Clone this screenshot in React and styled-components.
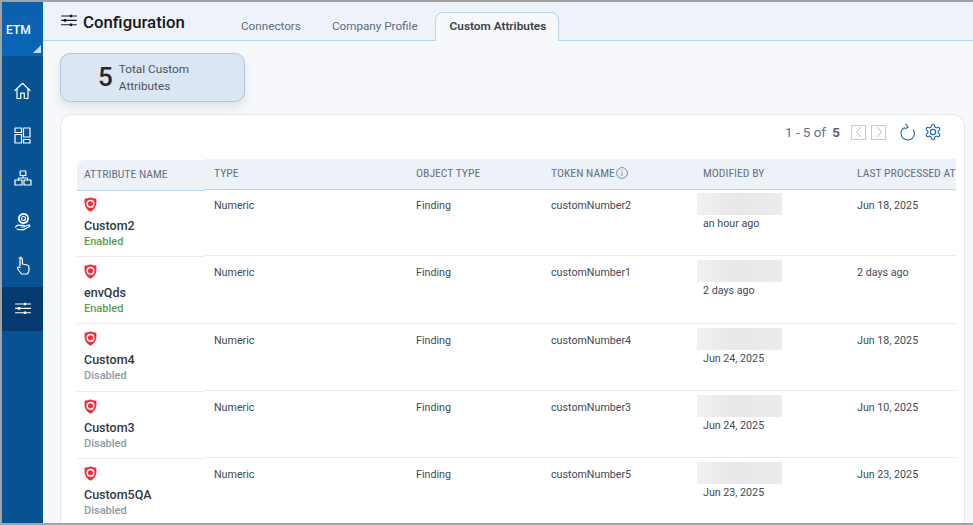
import React from "react";
import styled, { createGlobalStyle } from "styled-components";

const Global = createGlobalStyle`
  html, body { margin: 0; padding: 0; height: 100%; overflow: hidden; }
  body { font-family: Roboto, "Liberation Sans", sans-serif; color: #3b4450; }
  #root { height: 100%; }
`;

const Frame = styled.div`
  width: 973px; height: 525px; box-sizing: border-box;
  border: solid #a3a3a3; border-width: 2px 0 2px 2px;
  display: flex; background: #f6f8fb; overflow: hidden;
`;
const Sidebar = styled.nav`
  width: 41px; flex: none; background: #075293; display: flex; flex-direction: column;
`;
const Brand = styled.div`
  height: 54px; background: linear-gradient(#0a5fae, #0a66b8); color: #fff; position: relative;
  font-size: 12px; font-weight: 500; padding: 21px 0 0 4px; box-sizing: border-box;
  &::after {
    content: ""; position: absolute; right: 2px; bottom: 3px; width: 0; height: 0;
    border-style: solid; border-width: 0 0 8px 8px; border-color: transparent transparent #c6d8ea transparent;
  }
`;
const NavList = styled.div`
  display: flex; flex-direction: column; padding-top: 13px;
`;
const NavItem = styled.div`
  height: 43.6px; display: flex; align-items: center; justify-content: center;
  background: ${(p) => (p.$active ? "#053b70" : "transparent")};
  color: #fff;
`;
const Main = styled.div`
  flex: 1; min-width: 0; display: flex; flex-direction: column;
`;
const Header = styled.header`
  height: 39px; flex: none; box-sizing: border-box; background: #eef3f9;
  border-bottom: 1px solid #bcd4ea; display: flex; align-items: flex-end;
  padding-left: 18px;
`;
const TitleWrap = styled.div`
  display: flex; align-items: center; gap: 6px; width: 166px; height: 38px; padding-top: 2px; box-sizing: border-box;
  color: #15181c;
`;
const TitleIcon = styled.div`
  display: flex; margin-top: -4px;
`;
const Title = styled.h1`
  margin: 0; font-size: 16.8px; font-weight: 500; color: #15181c;
`;
const Tabs = styled.div`
  display: flex; height: 29px; margin-bottom: -1px;
`;
const Tab = styled.div`
  font-size: 11.7px; box-sizing: border-box; height: 29px; padding: 7px 14px 0; margin-right: ${(p) => p.$gap || 0}px;
  color: #5d6b7a;
  ${(p) => p.$active && `
    font-size: 11.8px; font-weight: 600; color: #39424e; background: #f6f8fb;
    border: 1px solid #bcd4ea; border-bottom: none; border-radius: 8px 8px 0 0;
    padding: 6px 12px 0 14px;
  `}
`;
const Content = styled.div`
  flex: 1; min-height: 0; padding: 12px 8px 0 17px; display: flex; flex-direction: column;
`;
const StatCard = styled.div`
  width: 185px; height: 49px; box-sizing: border-box; background: #dbe6f2;
  border: 1px solid #a9c8e4; border-radius: 10px; box-shadow: 0 6px 10px rgba(90, 110, 140, 0.14);
  display: flex; align-items: center; padding-left: 37px; gap: 6px;
`;
const StatNum = styled.div`
  font-size: 26px; font-weight: 500; color: #23282e; margin-top: -2px;
`;
const StatLabel = styled.div`
  font-size: 11.8px; line-height: 17px; color: #4a5460; width: 90px;
`;
const Panel = styled.section`
  flex: 1; min-height: 0; margin-top: 12px; background: #fff; border: 1px solid #e3e8ee; border-bottom: none;
  border-radius: 12px 12px 0 0; padding: 0 8px 0 16px; overflow: hidden;
`;
const Toolbar = styled.div`
  height: 44px; display: flex; align-items: center; justify-content: flex-end; padding-right: 14px; padding-bottom: 10px; box-sizing: border-box;
`;
const Pager = styled.div`
  font-size: 13.4px; color: #66727f; margin-right: 11px;
  b { font-weight: 700; margin-left: 3px; color: #5a6571; }
`;
const PageBtn = styled.div`
  width: 15px; height: 15px; box-sizing: border-box; border: 1px solid #c5cbd2; margin-right: 5px; display: flex; align-items: center; justify-content: center; color: #b5bcc4;
  &:last-of-type { margin-right: 0; }
`;
const ToolIcon = styled.div`
  display: flex; color: #1b6cb0; margin-left: ${(p) => p.$ml}px;
`;
const TableWrap = styled.div`
  display: flex; align-items: flex-start;
`;
const FixedCol = styled.div`
  width: 128px; flex: none; padding-top: 1px;
`;
const FixedHead = styled.div`
  height: 30.5px; box-sizing: border-box; background: #edf2f9; border-bottom: 1px solid #bcd6ee; border-radius: 8px 0 0 0;
  padding: 7px 0 0 7px;
`;
const HeadText = styled.span`
  font-family: "Roboto Condensed", "Liberation Sans Narrow", Roboto, sans-serif; font-size: 11.7px; line-height: 14px; color: #66727f; white-space: nowrap;
  display: flex; align-items: center; gap: 1px;
`;
const FixedRow = styled.div`
  height: 66.35px; margin-bottom: 1px; box-sizing: border-box; border-bottom: 1px solid #e6ebef; padding: 6px 0 0 7px;
`;
const ShieldWrap = styled.div`
  display: flex; height: 15px;
`;
const Name = styled.div`
  font-size: 12.5px; font-weight: 500; color: #2f3947; margin-top: 7px; line-height: 14px;
`;
const Status = styled.div`
  font-size: 11px; font-weight: 500; line-height: 14px; margin-top: 2px; color: ${(p) => (p.$on ? "#5c9e4f" : "#8a9ba8")};
`;
const ScrollCol = styled.div`
  flex: 1; min-width: 0; overflow: hidden;
`;
const Row = styled.div`
  display: grid; grid-template-columns: 202px 135px 152px 154px 110px; width: 753px;
`;
const HeadRow = styled(Row)`
  height: 31px; box-sizing: border-box; background: #edf2f9; border-bottom: 1px solid #bcd6ee;
`;
const HeadCell = styled.div`
  padding: 7px 0 0 9px;
`;
const BodyRow = styled(Row)`
  height: 66.35px; margin-bottom: 1px; box-sizing: border-box; border-bottom: 1px solid #e6ebef;
`;
const Cell = styled.div`
  font-size: 10.7px; color: #3f4a57; padding: 9px 0 0 9px; line-height: 13px;
`;
const Blurred = styled.div`
  width: 85px; height: 22px; margin: -6px 0 0 -6px; background: linear-gradient(90deg, #f1f1f1, #e8e8ea 45%, #ececec); 
`;
const SubDate = styled.div`
  margin-top: 2px; line-height: 13px;
`;

const Shield = () => (
  <svg width="13" height="15" viewBox="0 0 13 15">
    <path d="M6.500.3C8.500 1.300 10.500 1.700 12.300 1.700c.6 5 .2 9.500-5.800 13C.5 11.200.1 6.700.7 1.700 2.500 1.700 4.500 1.300 6.500.3Z" fill="#ee2f3a" />
    <circle cx="6.500" cy="6.800" r="3.300" fill="none" stroke="#fff" strokeWidth="1.500" />
    <path d="M7.500 9l1.300 1.700" stroke="#fff" strokeWidth="1.300" />
  </svg>
);

const iconProps = { fill: "none", stroke: "currentColor", strokeWidth: 1.2, strokeLinecap: "round", strokeLinejoin: "round" };

const Sliders = ({ size = 16 }) => (
  <svg width={size} height={size * 0.8} viewBox="0 0 16 13" fill="none" stroke="currentColor" strokeWidth="1.100">
    <path d="M0 2h16M0 6.500h16M0 11h16" />
    <path d="M10 .7v2.600M4 5.200v2.600M10 9.700v2.600" strokeWidth="2.400" />
  </svg>
);

const HomeIcon = () => (
  <svg width="17" height="18" viewBox="0 0 17 18" {...iconProps}>
    <path d="M1 8.500 8.500 1.300 16 8.500" />
    <path d="M3 7v9.500h3.700v-5.300h3.600v5.300H14V7" />
  </svg>
);
const DashIcon = () => (
  <svg width="17" height="17" viewBox="0 0 17 17" {...iconProps} style={{ marginTop: 2 }}>
    <rect x="1" y="1" width="6.500" height="4.500" />
    <rect x="1" y="7.500" width="6.500" height="8.500" />
    <rect x="9.500" y="1" width="6.500" height="9" />
    <rect x="9.500" y="12.500" width="6.500" height="3.500" />
  </svg>
);
const OrgIcon = () => (
  <svg width="18" height="16" viewBox="0 0 18 16" {...iconProps}>
    <rect x="6.200" y="1" width="5.600" height="4.500" />
    <path d="M9 5.500V8M4.500 10V8h9v2" />
    <rect x="1" y="10" width="7" height="5" />
    <rect x="10" y="10" width="7" height="5" />
  </svg>
);
const HandGear = () => (
  <svg width="18" height="19" viewBox="0 0 18 19" {...iconProps}>
    <circle cx="9.500" cy="6.500" r="4.600" strokeDasharray="2 1" strokeWidth="1.800" />
    <circle cx="9.500" cy="6.500" r="2" />
    <path d="M1.500 15c1.500-2 3-2.200 5-1.600h3c1.200 0 1.200 1.600 0 1.600H7m2.500 0 5-2c1.300-.4 1.800 1 .8 1.600L9.500 17.600H5L3 17" />
  </svg>
);
const TouchIcon = () => (
  <svg width="14" height="19" viewBox="0 0 14 19" {...iconProps}>
    <path d="M3 2.500C3.200 1.500 4.500.8 5.500 1.200" stroke="#f1b6c8" />
    <path d="M4 10V3.500c0-1.700 2.400-1.700 2.400 0V8l4.600 1c1.400.3 2 1.100 2 2.400V14c0 2-1 3-1.600 4H5.500L1.800 13c-1-1.300.6-2.800 2.200-1.400" />
  </svg>
);

const rows = [
  { n: "Custom2", on: true, t: "customNumber2", m: "an hour ago", l: "Jun 18, 2025" },
  { n: "envQds", on: true, t: "customNumber1", m: "2 days ago", l: "2 days ago" },
  { n: "Custom4", on: false, t: "customNumber4", m: "Jun 24, 2025", l: "Jun 18, 2025" },
  { n: "Custom3", on: false, t: "customNumber3", m: "Jun 24, 2025", l: "Jun 10, 2025" },
  { n: "Custom5QA", on: false, t: "customNumber5", m: "Jun 23, 2025", l: "Jun 23, 2025" },
];

export default function App() {
  return (
    <Frame>
      <Global />
      <Sidebar>
        <Brand>ETM</Brand>
        <NavList>
          <NavItem><HomeIcon /></NavItem>
          <NavItem><DashIcon /></NavItem>
          <NavItem><OrgIcon /></NavItem>
          <NavItem><HandGear /></NavItem>
          <NavItem><TouchIcon /></NavItem>
          <NavItem $active><Sliders /></NavItem>
        </NavList>
      </Sidebar>
      <Main>
        <Header>
          <TitleWrap>
            <TitleIcon><Sliders /></TitleIcon>
            <Title>Configuration</Title>
          </TitleWrap>
          <Tabs>
            <Tab $gap={3}>Connectors</Tab>
            <Tab $gap={3}>Company Profile</Tab>
            <Tab $active>Custom Attributes</Tab>
          </Tabs>
        </Header>
        <Content>
          <StatCard>
            <StatNum>5</StatNum>
            <StatLabel>Total Custom Attributes</StatLabel>
          </StatCard>
          <Panel>
            <Toolbar>
              <Pager>1 - 5 of <b>5</b></Pager>
              <PageBtn>
                <svg width="8" height="12" viewBox="0 0 8 12" fill="none" stroke="currentColor"><path d="M6 1 1.500 6 6 11" /></svg>
              </PageBtn>
              <PageBtn>
                <svg width="8" height="12" viewBox="0 0 8 12" fill="none" stroke="currentColor"><path d="M2 1l4.500 5L2 11" /></svg>
              </PageBtn>
              <ToolIcon $ml={9}>
                <svg width="16" height="18" viewBox="0 0 16 18" fill="none" stroke="currentColor" strokeWidth="1.100">
                  <path d="M5 4.500C2.500 5.500 1 7.800 1 10.300 1 14 4 17 7.800 17c3.600 0 6.600-3 6.600-6.500 0-1.500-.4-2.800-1.200-3.800" />
                  <path d="M5.500.8 8 4 4.800 6" />
                </svg>
              </ToolIcon>
              <ToolIcon $ml={8}>
                <svg width="18" height="18" viewBox="0 0 24 24" fill="none" stroke="currentColor" strokeWidth="1.500" strokeLinejoin="round">
                  <path d="M12.220 2h-.44a2 2 0 0 0-2 2v.18a2 2 0 0 1-1 1.730l-.43.250a2 2 0 0 1-2 0l-.15-.080a2 2 0 0 0-2.730.730l-.22.380a2 2 0 0 0 .730 2.730l.15.100a2 2 0 0 1 1 1.720v.510a2 2 0 0 1-1 1.740l-.15.090a2 2 0 0 0-.730 2.730l.22.380a2 2 0 0 0 2.730.730l.15-.080a2 2 0 0 1 2 0l.43.250a2 2 0 0 1 1 1.730V20a2 2 0 0 0 2 2h.44a2 2 0 0 0 2-2v-.18a2 2 0 0 1 1-1.730l.43-.250a2 2 0 0 1 2 0l.15.080a2 2 0 0 0 2.730-.730l.22-.390a2 2 0 0 0-.730-2.730l-.15-.080a2 2 0 0 1-1-1.740v-.500a2 2 0 0 1 1-1.740l.15-.090a2 2 0 0 0 .730-2.730l-.22-.380a2 2 0 0 0-2.730-.730l-.15.080a2 2 0 0 1-2 0l-.43-.250a2 2 0 0 1-1-1.730V4a2 2 0 0 0-2-2z" />
                  <circle cx="12" cy="12" r="3.500" />
                </svg>
              </ToolIcon>
            </Toolbar>
            <TableWrap>
              <FixedCol>
                <FixedHead><HeadText>ATTRIBUTE NAME</HeadText></FixedHead>
                {rows.map((r) => (
                  <FixedRow key={r.n}>
                    <ShieldWrap><Shield /></ShieldWrap>
                    <Name>{r.n}</Name>
                    <Status $on={r.on}>{r.on ? "Enabled" : "Disabled"}</Status>
                  </FixedRow>
                ))}
              </FixedCol>
              <ScrollCol>
                <HeadRow>
                  <HeadCell><HeadText>TYPE</HeadText></HeadCell>
                  <HeadCell><HeadText>OBJECT TYPE</HeadText></HeadCell>
                  <HeadCell>
                    <HeadText>
                      TOKEN NAME
                      <svg width="12" height="12" viewBox="0 0 12 12" fill="none" stroke="currentColor" strokeWidth="0.800">
                        <circle cx="6" cy="6" r="5.400" />
                        <path d="M6 5v4M6 3v1" />
                      </svg>
                    </HeadText>
                  </HeadCell>
                  <HeadCell><HeadText>MODIFIED BY</HeadText></HeadCell>
                  <HeadCell><HeadText>LAST PROCESSED AT</HeadText></HeadCell>
                </HeadRow>
                {rows.map((r) => (
                  <BodyRow key={r.n}>
                    <Cell>Numeric</Cell>
                    <Cell>Finding</Cell>
                    <Cell>{r.t}</Cell>
                    <Cell><Blurred /><SubDate>{r.m}</SubDate></Cell>
                    <Cell>{r.l}</Cell>
                  </BodyRow>
                ))}
              </ScrollCol>
            </TableWrap>
          </Panel>
        </Content>
      </Main>
    </Frame>
  );
}
